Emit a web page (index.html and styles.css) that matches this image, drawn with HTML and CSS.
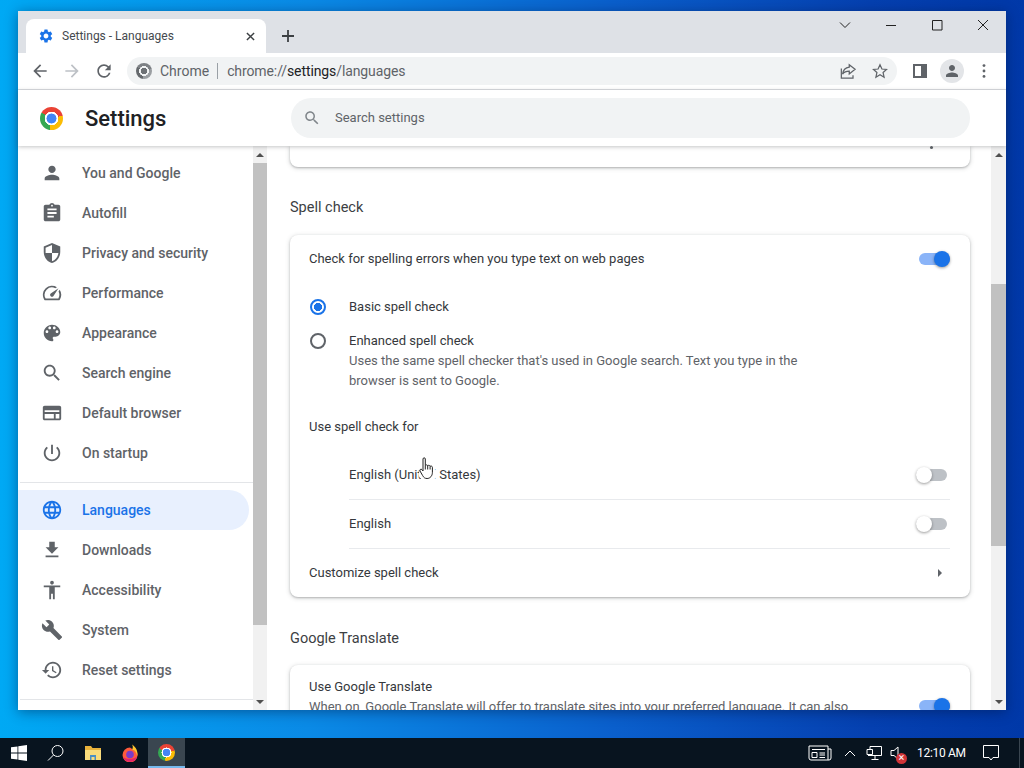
FILE: index.html
```html
<!DOCTYPE html>
<html lang="en">
<head>
<meta charset="UTF-8">
<title>Settings - Languages</title>
<link rel="stylesheet" href="styles.css">
</head>
<body>
<div class="desktop">
  <div class="window">
    <div class="tabstrip">
      <div class="tab">
        <svg class="tab-icon" viewBox="0 0 24 24"><path d="M19.14 12.94c.04-.3.06-.61.06-.94 0-.32-.02-.64-.07-.94l2.03-1.58a.49.49 0 0 0 .12-.61l-1.92-3.32a.488.488 0 0 0-.59-.22l-2.39.96c-.5-.38-1.03-.7-1.62-.94l-.36-2.54a.484.484 0 0 0-.48-.41h-3.84c-.24 0-.43.17-.47.41l-.36 2.54c-.59.24-1.13.57-1.62.94l-2.39-.96c-.22-.08-.47 0-.59.22L2.74 8.87c-.12.21-.08.47.12.61l2.03 1.58c-.05.3-.09.63-.09.94s.02.64.07.94l-2.03 1.58a.49.49 0 0 0-.12.61l1.92 3.32c.12.22.37.29.59.22l2.39-.96c.5.38 1.03.7 1.62.94l.36 2.54c.05.24.24.41.48.41h3.84c.24 0 .44-.17.47-.41l.36-2.54c.59-.24 1.13-.56 1.62-.94l2.39.96c.22.08.47 0 .59-.22l1.92-3.32c.12-.22.07-.47-.12-.61l-2.01-1.58zM12 15.6c-1.98 0-3.6-1.62-3.6-3.6s1.62-3.6 3.6-3.6 3.6 1.62 3.6 3.6-1.62 3.6-3.6 3.6z"/></svg>
        <span class="tab-title">Settings - Languages</span>
        <svg class="tab-close" viewBox="0 0 10 10"><path d="M1 1l8 8M9 1l-8 8"/></svg>
      </div>
      <svg class="new-tab" viewBox="0 0 12 12"><path d="M6 0v12M0 6h12"/></svg>
      <div class="win-controls">
        <div class="win-btn"><svg viewBox="0 0 12 12"><path d="M1 3.5l5 5 5-5"/></svg></div>
        <div class="win-btn"><svg viewBox="0 0 12 12"><path d="M1 6.5h10"/></svg></div>
        <div class="win-btn"><svg viewBox="0 0 12 12"><path d="M1.5 1.5h9.5v9.5h-9.5z"/></svg></div>
        <div class="win-btn"><svg viewBox="0 0 12 12"><path d="M1 1l10 10M11 1l-10 10"/></svg></div>
      </div>
    </div>

    <div class="toolbar">
      <div class="tool-btn"><svg viewBox="0 0 24 24"><path d="M20 11H7.83l5.59-5.59L12 4l-8 8 8 8 1.41-1.41L7.83 13H20v-2z"/></svg></div>
      <div class="tool-btn tool-off"><svg viewBox="0 0 24 24"><path d="M12 4l-1.41 1.41L16.17 11H4v2h12.17l-5.58 5.59L12 20l8-8z"/></svg></div>
      <div class="tool-btn"><svg viewBox="0 0 24 24"><path d="M17.65 6.35A7.958 7.958 0 0 0 12 4c-4.42 0-7.99 3.58-7.99 8s3.57 8 7.99 8c3.73 0 6.84-2.55 7.73-6h-2.08A5.99 5.99 0 0 1 12 18c-3.31 0-6-2.69-6-6s2.69-6 6-6c1.66 0 3.14.69 4.22 1.78L13 11h7V4l-2.35 2.35z"/></svg></div>
      <div class="omnibox">
        <div class="chrome-grey"></div>
        <span class="omni-scheme">Chrome</span>
        <span class="omni-divider"></span>
        <span class="omni-url">chrome://<b>settings</b>/languages</span>
        <div class="omni-actions">
          <div class="tool-btn"><svg viewBox="0 0 24 24"><path class="outline" d="M13.5 4.5l7 5.5-7 5.5v-3.3c-3.6 0-6.2 1-8 3.6.5-4.400 3-7.700 8-8.400zM4 9v11.500h14V17"/></svg></div>
          <div class="tool-btn"><svg viewBox="0 0 24 24"><path class="outline" d="M12 4.500l2.300 5.100 5.500.6-4.100 3.700 1.200 5.500-4.900-2.900-4.900 2.900 1.200-5.500-4.100-3.700 5.500-.6z"/></svg></div>
        </div>
      </div>
      <div class="tool-btn tool-panel"><div class="side-panel"></div></div>
      <div class="tool-btn"><div class="avatar"><svg viewBox="0 0 24 24"><path d="M12 12c2.210 0 4-1.790 4-4s-1.790-4-4-4-4 1.790-4 4 1.790 4 4 4zm0 2c-2.670 0-8 1.340-8 4v2h16v-2c0-2.660-5.330-4-8-4z"/></svg></div></div>
      <div class="tool-btn"><svg viewBox="0 0 24 24"><circle cx="12" cy="5.500" r="1.700"/><circle cx="12" cy="12" r="1.700"/><circle cx="12" cy="18.500" r="1.700"/></svg></div>
    </div>

    <div class="settings-header">
      <div class="chrome-logo"></div>
      <h1 class="settings-title">Settings</h1>
      <div class="search-box">
        <svg viewBox="0 0 24 24"><path d="M15.500 14h-.79l-.28-.27C15.410 12.590 16 11.110 16 9.500 16 5.910 13.090 3 9.500 3S3 5.910 3 9.500 5.910 16 9.500 16c1.610 0 3.090-.59 4.230-1.570l.27.28v.79l5 4.990L20.490 19l-4.990-5zm-6 0C7.010 14 5 11.990 5 9.500S7.010 5 9.500 5 14 7.010 14 9.500 11.990 14 9.500 14z"/></svg>
        <span>Search settings</span>
      </div>
    </div>

    <div class="settings-body">
      <nav class="sidebar">
        <div class="nav-item"><svg viewBox="0 0 24 24"><path d="M12 12c2.210 0 4-1.790 4-4s-1.790-4-4-4-4 1.790-4 4 1.790 4 4 4zm0 2c-2.670 0-8 1.340-8 4v2h16v-2c0-2.660-5.330-4-8-4z"/></svg>You and Google</div>
        <div class="nav-item"><svg viewBox="0 0 24 24"><path d="M19 3h-4.180C14.400 1.840 13.300 1 12 1c-1.300 0-2.400.84-2.820 2H5c-1.100 0-2 .9-2 2v14c0 1.100.9 2 2 2h14c1.100 0 2-.9 2-2V5c0-1.100-.9-2-2-2zm-7 0c.55 0 1 .45 1 1s-.45 1-1 1-1-.45-1-1 .45-1 1-1zm2 14H7v-2h7v2zm3-4H7v-2h10v2zm0-4H7V7h10v2z"/></svg>Autofill</div>
        <div class="nav-item"><svg viewBox="0 0 24 24"><path d="M12 1L3 5v6c0 5.550 3.840 10.740 9 12 5.160-1.260 9-6.450 9-12V5l-9-4zm0 10.990h7c-.53 4.120-3.280 7.790-7 8.940V12H5V6.300l7-3.110v8.800z"/></svg>Privacy and security</div>
        <div class="nav-item"><svg viewBox="0 0 24 24"><path d="M20.380 8.570l-1.230 1.850a8 8 0 0 1-.22 7.580H5.070A8 8 0 0 1 15.580 6.850l1.850-1.230A10 10 0 0 0 3.350 19a2 2 0 0 0 1.720 1h13.850a2 2 0 0 0 1.740-1 10 10 0 0 0-.27-10.440zm-9.790 6.840a2 2 0 0 0 2.830 0l5.660-8.490-8.490 5.660a2 2 0 0 0 0 2.830z"/></svg>Performance</div>
        <div class="nav-item"><svg viewBox="0 0 24 24"><path d="M12 3c-4.970 0-9 4.030-9 9s4.030 9 9 9c.83 0 1.500-.67 1.500-1.500 0-.39-.15-.74-.39-1.010-.23-.26-.38-.61-.38-.99 0-.83.67-1.500 1.500-1.500H16c2.760 0 5-2.240 5-5 0-4.420-4.030-8-9-8zm-5.500 9c-.83 0-1.500-.67-1.500-1.500S5.670 9 6.500 9 8 9.670 8 10.500 7.330 12 6.500 12zm3-4C8.670 8 8 7.330 8 6.500S8.670 5 9.500 5s1.500.67 1.500 1.500S10.330 8 9.500 8zm5 0c-.83 0-1.500-.67-1.500-1.500S13.670 5 14.500 5s1.500.67 1.500 1.500S15.330 8 14.500 8zm3 4c-.83 0-1.500-.67-1.500-1.500S16.670 9 17.500 9s1.500.67 1.500 1.500-.67 1.500-1.500 1.500z"/></svg>Appearance</div>
        <div class="nav-item"><svg viewBox="0 0 24 24"><path d="M15.500 14h-.79l-.28-.27C15.410 12.590 16 11.110 16 9.500 16 5.910 13.090 3 9.500 3S3 5.910 3 9.500 5.910 16 9.500 16c1.610 0 3.090-.59 4.230-1.570l.27.28v.79l5 4.990L20.490 19l-4.990-5zm-6 0C7.010 14 5 11.990 5 9.500S7.010 5 9.500 5 14 7.010 14 9.500 11.990 14 9.500 14z"/></svg>Search engine</div>
        <div class="nav-item"><svg viewBox="0 0 24 24"><path d="M20 4H4c-1.100 0-2 .9-2 2v12c0 1.100.9 2 2 2h16c1.100 0 2-.9 2-2V6c0-1.100-.9-2-2-2zM4 18v-5h10v5H4zm16 0h-4v-5h4v5zm0-7H4V9h16v2z"/></svg>Default browser</div>
        <div class="nav-item"><svg viewBox="0 0 24 24"><path d="M13 3h-2v10h2V3zm4.830 2.170l-1.420 1.420C17.990 7.860 19 9.810 19 12c0 3.870-3.130 7-7 7s-7-3.130-7-7c0-2.190 1.010-4.140 2.580-5.420L6.170 5.170C4.230 6.820 3 9.260 3 12c0 4.970 4.030 9 9 9s9-4.030 9-9c0-2.740-1.230-5.180-3.170-6.830z"/></svg>On startup</div>
        <div class="nav-sep"></div>
        <div class="nav-item nav-active"><svg viewBox="0 0 24 24"><path d="M11.990 2C6.470 2 2 6.480 2 12s4.470 10 9.990 10C17.520 22 22 17.520 22 12S17.520 2 11.990 2zm6.930 6h-2.950c-.32-1.250-.78-2.450-1.380-3.560 1.840.63 3.370 1.910 4.330 3.560zM12 4.040c.83 1.200 1.480 2.530 1.910 3.960h-3.820c.43-1.430 1.080-2.760 1.910-3.960zM4.260 14C4.100 13.360 4 12.690 4 12s.1-1.360.26-2h3.380c-.08.66-.14 1.320-.14 2 0 .68.06 1.340.14 2H4.260zm.82 2h2.950c.32 1.250.78 2.450 1.380 3.560-1.840-.63-3.370-1.900-4.330-3.560zm2.950-8H5.080c.96-1.660 2.490-2.930 4.330-3.560C8.810 5.550 8.350 6.750 8.030 8zM12 19.960c-.83-1.200-1.480-2.530-1.910-3.960h3.820c-.43 1.430-1.080 2.760-1.910 3.960zM14.340 14H9.660c-.09-.66-.16-1.320-.16-2 0-.68.07-1.350.16-2h4.680c.09.65.16 1.320.16 2 0 .68-.07 1.340-.16 2zm.25 5.560c.6-1.110 1.060-2.310 1.380-3.560h2.950c-.96 1.650-2.490 2.930-4.330 3.560zM16.360 14c.08-.66.14-1.320.14-2 0-.68-.06-1.340-.14-2h3.380c.16.64.26 1.310.26 2s-.1 1.360-.26 2h-3.380z"/></svg>Languages</div>
        <div class="nav-item"><svg viewBox="0 0 24 24"><path d="M19 9h-4V3H9v6H5l7 7 7-7zM5 18v2h14v-2H5z"/></svg>Downloads</div>
        <div class="nav-item"><svg viewBox="0 0 24 24"><path d="M12 2c1.100 0 2 .9 2 2s-.9 2-2 2-2-.9-2-2 .9-2 2-2zm9 7h-6v13h-2v-6h-2v6H9V9H3V7h18v2z"/></svg>Accessibility</div>
        <div class="nav-item"><svg viewBox="0 0 24 24"><path d="M22.700 19l-9.100-9.100c.9-2.300.4-5-1.500-6.900-2-2-5-2.400-7.400-1.300L9 6 6 9 1.600 4.700C.4 7.100.9 10.100 2.900 12.100c1.900 1.900 4.600 2.400 6.900 1.500l9.100 9.100c.4.4 1 .4 1.400 0l2.300-2.300c.5-.4.5-1.100.1-1.400z"/></svg>System</div>
        <div class="nav-item"><svg viewBox="0 0 24 24"><path d="M13 3c-4.970 0-9 4.030-9 9H1l3.890 3.890.07.14L9 12H6c0-3.870 3.130-7 7-7s7 3.130 7 7-3.130 7-7 7c-1.930 0-3.680-.79-4.940-2.060l-1.420 1.420C8.270 19.990 10.510 21 13 21c4.970 0 9-4.030 9-9s-4.030-9-9-9zm-1 5v5l4.280 2.540.72-1.210-3.500-2.080V8H12z"/></svg>Reset settings</div>
        <div class="nav-sep"></div>
      </nav>
      <div class="scrollbar">
        <div class="sb-arrow"><span class="arrow-up"></span></div>
        <div class="sb-thumb thumb-nav"></div>
        <div class="sb-arrow sb-bottom"><span class="arrow-down"></span></div>
      </div>

      <main class="main">
        <div class="card card-stub">
          <div class="stub-row"><span>Language</span><span class="stub-dot"></span></div>
        </div>

        <h2 class="section-title">Spell check</h2>
        <section class="card">
          <div class="row row-first">
            <span class="row-first-text">Check for spelling errors when you type text on web pages</span>
            <span class="toggle toggle-on"></span>
          </div>
          <div class="radio-row radio-basic">
            <span class="radio radio-checked"></span>
            <span>Basic spell check</span>
          </div>
          <div class="radio-row radio-enhanced">
            <span class="radio"></span>
            <div>
              <div>Enhanced spell check</div>
              <div class="secondary desc">Uses the same spell checker that's used in Google search. Text you type in the browser is sent to Google.</div>
            </div>
          </div>
          <div class="row row-label">Use spell check for</div>
          <div class="sub-row">
            <span>English (United States)</span>
            <span class="toggle"></span>
          </div>
          <div class="sub-row">
            <span>English</span>
            <span class="toggle"></span>
          </div>
          <div class="row row-link">
            <span>Customize spell check</span>
            <span class="arrow-right"></span>
          </div>
        </section>

        <h2 class="section-title">Google Translate</h2>
        <section class="card">
          <div class="row row-translate">
            <div class="translate-text">
              <div>Use Google Translate</div>
              <div class="secondary">When on, Google Translate will offer to translate sites into your preferred language. It can also</div>
            </div>
            <span class="toggle toggle-on"></span>
          </div>
        </section>
      </main>
      <div class="scrollbar scrollbar-main">
        <div class="sb-arrow"><span class="arrow-up"></span></div>
        <div class="sb-thumb thumb-main"></div>
        <div class="sb-arrow sb-bottom"><span class="arrow-down"></span></div>
      </div>
    </div>
  </div>

  <!-- mouse pointer over the page -->
  <svg class="cursor" viewBox="0 0 20 26"><ellipse class="cursor-halo" cx="10" cy="18" rx="9.500" ry="7"/><path d="M5 3c0-1.600 2.300-1.600 2.300 0v6.500c.6-.9 2.100-.8 2.400.3.700-.8 2.100-.6 2.400.5.800-.6 2.200-.2 2.300 1v5c0 3.500-2.200 6.200-5.300 6.200-2.300 0-3.400-1-4.500-3L2 15c-.7-1.300 1-2.500 2-1.300l1 1.300z"/><path d="M7.300 9.500v4M9.700 9.800v3.700M12.100 10.300v3.200"/></svg>
</div>

<div class="taskbar">
  <div class="task-btn">
    <svg viewBox="0 0 18 18"><path class="white" d="M1 3.300l6.500-.9v6.100H1zM8.300 2.300L17 1v7.500H8.300zM1 9.400h6.500v6.200L1 14.700zM8.300 9.400H17V17l-8.700-1.200z"/></svg>
  </div>
  <div class="task-btn">
    <svg viewBox="0 0 18 18"><circle class="white-line" cx="10.500" cy="7" r="5.500"/><path class="white-line" d="M6.500 11L1 16.500"/></svg>
  </div>
  <div class="task-btn">
    <svg viewBox="0 0 18 18"><path fill="#e8b23c" d="M1 2h6l1.500 2H17v12H1z"/><path fill="#f9dc7c" d="M1 6h16v10H1z"/><path fill="#4a8fc4" d="M6 11h6v5h-1.500v-3h-3v3H6z"/></svg>
  </div>
  <div class="task-btn">
    <svg viewBox="0 0 18 18"><path fill="#ff5a3c" d="M9 3.500a7.500 7.500 0 1 0 7.500 7.500c0-1-.2-2-.6-2.800z"/><path fill="#e3246b" d="M2 13a7.500 7.500 0 0 0 14.200-.5C13 15 6 16 2 13z"/><path fill="#ffc42e" d="M11 0.500c3 2 5.500 5 5.500 9.500 0 1-.2 1.500-.4 2-.3-3-2-5.500-5-6.500 1-1.500 1-3.500-.1-5z"/><circle fill="#7a3cc8" cx="9" cy="10.500" r="3.800"/></svg>
  </div>
  <div class="task-btn task-active">
    <div class="chrome-logo chrome-task"></div>
  </div>
  <div class="tray">
    <svg class="tray-news" viewBox="0 0 24 16"><path class="white-line" d="M1 1h19v14H3a2 2 0 0 1-2-2zM20 4h3v9a2 2 0 0 1-2 2h-1M4 4.500h13M4 7.500h5v5H4zM11.500 8H17M11.500 10H17M11.500 12.500H17"/></svg>
    <svg class="tray-caret" viewBox="0 0 12 7"><path class="white-line" d="M1 6l5-5 5 5"/></svg>
    <svg class="tray-net" viewBox="0 0 16 16"><path class="white-line" d="M4 1.500h11.500v9H2M4 1.500v3M1 4.500h5.500v5H1zM9 10.500v3.500M5.500 14.500h7"/></svg>
    <div class="tray-sound">
      <svg viewBox="0 0 16 16"><path class="white-line" d="M1 5.500h3L8 2v12l-4-3.500H1z"/></svg>
      <span class="mute-badge">×</span>
    </div>
    <span class="tray-time">12:10 AM</span>
    <svg class="tray-notify" viewBox="0 0 16 16"><path class="white-line" d="M.5.500h15v12H10l-2 2.500-2-2.500H.5z"/></svg>
    <span class="tray-edge"></span>
  </div>
</div>
</body>
</html>
```

FILE: styles.css
```css
body {
    margin: 0;
    height: 100vh;
    display: flex;
    flex-direction: column;
    overflow: hidden;
    font-family: Roboto, "Liberation Sans", sans-serif;
    font-size: 13px;
    color: #35383c;
}
svg {
    display: block;
    fill: #5f6368;
}

/* desktop + window */
.desktop {
    flex: 1;
    position: relative;
    background: linear-gradient(90deg, #00a9f4 0%, #0a8ae6 30%, #0a5fcc 60%, #0540b0 85%, #0038a8 100%);
}
.window {
    position: absolute;
    left: 18px;
    top: 11px;
    width: 988px;
    height: 699px;
    display: flex;
    flex-direction: column;
    background: #fff;
    box-shadow: 0 2px 12px rgba(0, 20, 60, 0.45);
}
.cursor {
    position: absolute;
    left: 418px;
    top: 456px;
    width: 20px;
    height: 26px;
    fill: #fff;
    stroke: #222;
    stroke-width: 1;
}
.cursor-halo {
    stroke: none;
}

/* tabs */
.tabstrip {
    height: 42px;
    flex: none;
    display: flex;
    align-items: flex-end;
    padding-left: 8px;
    background: #dee1e6;
}
.tab {
    width: 240px;
    height: 34px;
    display: flex;
    align-items: center;
    box-sizing: border-box;
    padding: 0 10px 0 12px;
    background: #fff;
    border-radius: 8px 8px 0 0;
}
.tab-icon {
    width: 16px;
    height: 16px;
    fill: #1a73e8;
    flex: none;
}
.tab-title {
    margin-left: 8px;
    flex: 1;
    font-size: 12px;
    color: #45494e;
}
.tab-close {
    width: 9px;
    height: 9px;
    fill: none;
    stroke: #3c4043;
    stroke-width: 1.6;
    margin-right: 1px;
}
.new-tab {
    width: 12px;
    height: 12px;
    margin: 0 0 11px 16px;
    fill: none;
    stroke: #3c4043;
    stroke-width: 1.800;
}
.win-controls {
    margin-left: auto;
    align-self: flex-start;
    display: flex;
}
.win-btn {
    width: 46px;
    height: 28px;
    display: flex;
    align-items: center;
    justify-content: center;
}
.win-btn svg {
    width: 12px;
    height: 12px;
    fill: none;
    stroke: #222;
    stroke-width: 1;
}

/* toolbar */
.toolbar {
    height: 36px;
    flex: none;
    display: flex;
    align-items: center;
    padding: 0 6px;
    background: #fff;
    border-bottom: 1px solid #dadce0;
}
.tool-btn {
    width: 32px;
    height: 28px;
    flex: none;
    display: flex;
    align-items: center;
    justify-content: center;
}
.tool-btn svg {
    width: 20px;
    height: 20px;
}
.tool-off svg {
    fill: #bdc1c6;
}
.tool-panel {
    margin-left: 7px;
}
.side-panel {
    width: 14px;
    height: 14px;
    box-sizing: border-box;
    background: #fff;
    border: 2px solid #5f6368;
    border-right-width: 6px;
}
.avatar {
    width: 24px;
    height: 24px;
    border-radius: 50%;
    background: #e3e5e8;
    display: flex;
    align-items: center;
    justify-content: center;
}
.avatar svg {
    width: 18px;
    height: 18px;
}
svg .outline {
    fill: none;
    stroke: #5f6368;
    stroke-width: 1.500;
}
.omnibox {
    flex: 1;
    height: 28px;
    margin-left: 7px;
    display: flex;
    align-items: center;
    padding: 0 1px 0 9px;
    background: #f1f3f4;
    border-radius: 14px;
    font-size: 14px;
}
.chrome-grey {
    width: 16px;
    height: 16px;
    flex: none;
    border-radius: 50%;
    background:
        radial-gradient(circle closest-side, #6d7175 0 40%, #f1f3f4 44% 60%, transparent 64%),
        conic-gradient(#7d8185 0 75deg, #9a9ea2 75deg 190deg, #65696d 190deg 300deg, #7d8185 300deg);
}
.omni-scheme {
    margin-left: 8px;
    color: #5f6368;
}
.omni-divider {
    width: 1px;
    height: 16px;
    margin: 0 9px 0 8px;
    background: #9aa0a6;
}
.omni-url {
    color: #5f6368;
    letter-spacing: -0.1px;
}
.omni-url b {
    font-weight: 400;
    color: #202124;
}
.omni-actions {
    margin-left: auto;
    display: flex;
}

/* settings header */
.settings-header {
    height: 56px;
    flex: none;
    display: flex;
    align-items: center;
    padding-left: 22px;
    background: #fff;
    position: relative;
    z-index: 2;
    box-shadow: 0 1px 4px rgba(60, 64, 67, 0.3);
}
.chrome-logo {
    width: 23px;
    height: 23px;
    flex: none;
    border-radius: 50%;
    background:
        radial-gradient(circle closest-side, #4285f4 0 42%, #fff 45% 58%, transparent 60%),
        conic-gradient(#ea4335 0 75deg, #fbbc04 75deg 190deg, #34a853 190deg 300deg, #ea4335 300deg);
}
.settings-title {
    margin: 0 0 0 22px;
    width: 206px;
    font-size: 22px;
    font-weight: 500;
    color: #202124;
}
.search-box {
    width: 679px;
    height: 40px;
    display: flex;
    align-items: center;
    padding-left: 12px;
    box-sizing: border-box;
    background: #f1f3f4;
    border-radius: 20px;
    color: #5f6368;
}
.search-box svg {
    width: 18px;
    height: 18px;
    margin-right: 14px;
    fill: #80868b;
}
.search-box span {
    margin-bottom: 2px;
}

/* body columns */
.settings-body {
    flex: 1;
    display: flex;
    min-height: 0;
}
.sidebar {
    width: 235px;
    flex: none;
    padding-top: 7px;
    box-sizing: border-box;
}
.nav-item {
    height: 40px;
    display: flex;
    align-items: center;
    margin-right: 4px;
    padding-left: 22px;
    font-size: 14px;
    font-weight: 500;
    color: #5f6368;
    border-radius: 0 20px 20px 0;
}
.nav-item svg {
    width: 22px;
    height: 22px;
    padding: 1px;
    margin-right: 18px;
    flex: none;
}
.nav-active {
    background: #e8f0fe;
    color: #1a73e8;
}
.nav-active svg {
    fill: #1a73e8;
}
.nav-sep {
    height: 1px;
    margin: 9px 0 7px 2px;
    background: #e3e5e8;
}

/* scrollbars */
.scrollbar {
    width: 14px;
    flex: none;
    display: flex;
    flex-direction: column;
    background: #f1f1f1;
}
.scrollbar-main {
    width: 15px;
}
.sb-arrow {
    height: 17px;
    flex: none;
    display: flex;
    align-items: center;
    justify-content: center;
}
.sb-bottom {
    margin-top: auto;
}
.sb-thumb {
    background: #c1c1c1;
}
.thumb-nav {
    height: 462px;
}
.thumb-main {
    height: 262px;
    margin-top: 121px;
}
.arrow-up,
.arrow-down {
    width: 0;
    height: 0;
    border-left: 4px solid transparent;
    border-right: 4px solid transparent;
}
.arrow-up {
    border-bottom: 4px solid #505050;
}
.arrow-down {
    border-top: 4px solid #505050;
}

/* main column */
.main {
    flex: 1;
    min-width: 0;
    overflow: hidden;
    padding: 0 21px 0 23px;
    background: #fff;
}
.card {
    width: 680px;
    box-sizing: border-box;
    background: #fff;
    border-radius: 8px;
    box-shadow: 0 1px 2px rgba(60, 64, 67, 0.3), 0 1px 4px 1px rgba(60, 64, 67, 0.15);
}
.card-stub {
    height: 21px;
    overflow: hidden;
    border-radius: 0 0 8px 8px;
}
.stub-row {
    display: flex;
    justify-content: space-between;
    margin-top: -15px;
    padding: 0 37px 0 43px;
}
.stub-dot {
    width: 3px;
    height: 3px;
    margin-top: 15px;
    border-radius: 50%;
    background: #5f6368;
}
.section-title {
    margin: 0;
    padding: 31px 0 17px;
    font-size: 14.5px;
    line-height: 20px;
    font-weight: 400;
    color: #3c4043;
}
.section-title + .card ~ .section-title {
    padding-top: 32px;
    padding-bottom: 16px;
}
.row {
    display: flex;
    align-items: center;
    justify-content: space-between;
    padding: 0 20px 0 19px;
}
.row-first {
    height: 48px;
}
.row-first-text {
    margin-bottom: 2px;
}
.row-label {
    height: 48px;
}
.row-link {
    height: 49px;
}
.row-translate {
    height: 82px;
}
.translate-text {
    align-self: flex-start;
    padding-top: 12px;
    white-space: nowrap;
    line-height: 20px;
}
.secondary {
    color: #5f6368;
}
.desc {
    max-width: 460px;
    line-height: 20px;
}
.radio-row {
    display: flex;
    padding: 0 20px 0 19px;
    line-height: 20px;
}
.radio-basic {
    height: 48px;
    align-items: center;
}
.radio-enhanced {
    padding-bottom: 11px;
}
.radio {
    width: 16px;
    height: 16px;
    flex: none;
    box-sizing: border-box;
    margin: 0 23px 0 1px;
    border: 2px solid #5f6368;
    border-radius: 50%;
}
.radio-enhanced .radio {
    margin-top: 2px;
}
.radio-checked {
    border-color: #1a73e8;
    background: radial-gradient(circle closest-side, #1a73e8 0 66%, #fff 72%);
}
.sub-row {
    height: 49px;
    box-sizing: border-box;
    display: flex;
    align-items: center;
    justify-content: space-between;
    margin: 0 20px 0 59px;
    padding-right: 3px;
    box-shadow: 0 1px 0 #e8eaed;
}
.sub-row .toggle {
    margin-top: 1px;
}
.arrow-right {
    width: 0;
    height: 0;
    margin-right: 8px;
    border-top: 4px solid transparent;
    border-bottom: 4px solid transparent;
    border-left: 4px solid #5f6368;
}

/* toggles */
.toggle {
    width: 31px;
    height: 12px;
    flex: none;
    position: relative;
    box-sizing: border-box;
    background: #bdc1c6;
    border-radius: 6px;
}
.toggle::after {
    content: "";
    position: absolute;
    left: 0;
    top: -2px;
    width: 16px;
    height: 16px;
    border-radius: 50%;
    background: #fff;
    box-shadow: 0 1px 3px rgba(0, 0, 0, 0.4);
}
.toggle-on {
    background: #8ab4f8;
}
.toggle-on::after {
    left: auto;
    right: 0;
    background: #1a73e8;
}

/* taskbar */
.taskbar {
    height: 30px;
    flex: none;
    display: flex;
    background: #08141f;
}
.task-btn {
    width: 37px;
    height: 30px;
    display: flex;
    align-items: center;
    justify-content: center;
    box-sizing: border-box;
}
.task-btn svg {
    width: 18px;
    height: 18px;
}
.task-active {
    background: #3a4650;
    border-bottom: 2px solid #76b9ed;
}
svg .white {
    fill: #fff;
}
svg .white-line {
    fill: none;
    stroke: #fff;
    stroke-width: 1;
}
.chrome-task {
    width: 17px;
    height: 17px;
}
.tray {
    margin-left: auto;
    display: flex;
    align-items: center;
}
.tray-news {
    width: 24px;
    height: 16px;
    margin-right: 12px;
}
.tray-caret {
    width: 12px;
    height: 7px;
    margin-right: 10px;
}
.tray-net {
    width: 16px;
    height: 16px;
    margin-right: 8px;
}
.tray-sound {
    width: 16px;
    height: 16px;
    position: relative;
    margin-right: 11px;
}
.tray-sound svg {
    width: 16px;
    height: 16px;
}
.mute-badge {
    position: absolute;
    right: -1px;
    bottom: -3px;
    width: 11px;
    height: 11px;
    border-radius: 50%;
    background: #d13438;
    color: #fff;
    font-size: 11px;
    line-height: 10px;
    text-align: center;
}
.tray-time {
    width: 50px;
    margin-right: 16px;
    font-size: 12px;
    letter-spacing: -0.3px;
    color: #fff;
    white-space: nowrap;
}
.tray-notify {
    width: 16px;
    height: 16px;
    margin-right: 20px;
}
.tray-edge {
    width: 1px;
    height: 30px;
    margin-right: 4px;
    background: #3a4650;
}
```
